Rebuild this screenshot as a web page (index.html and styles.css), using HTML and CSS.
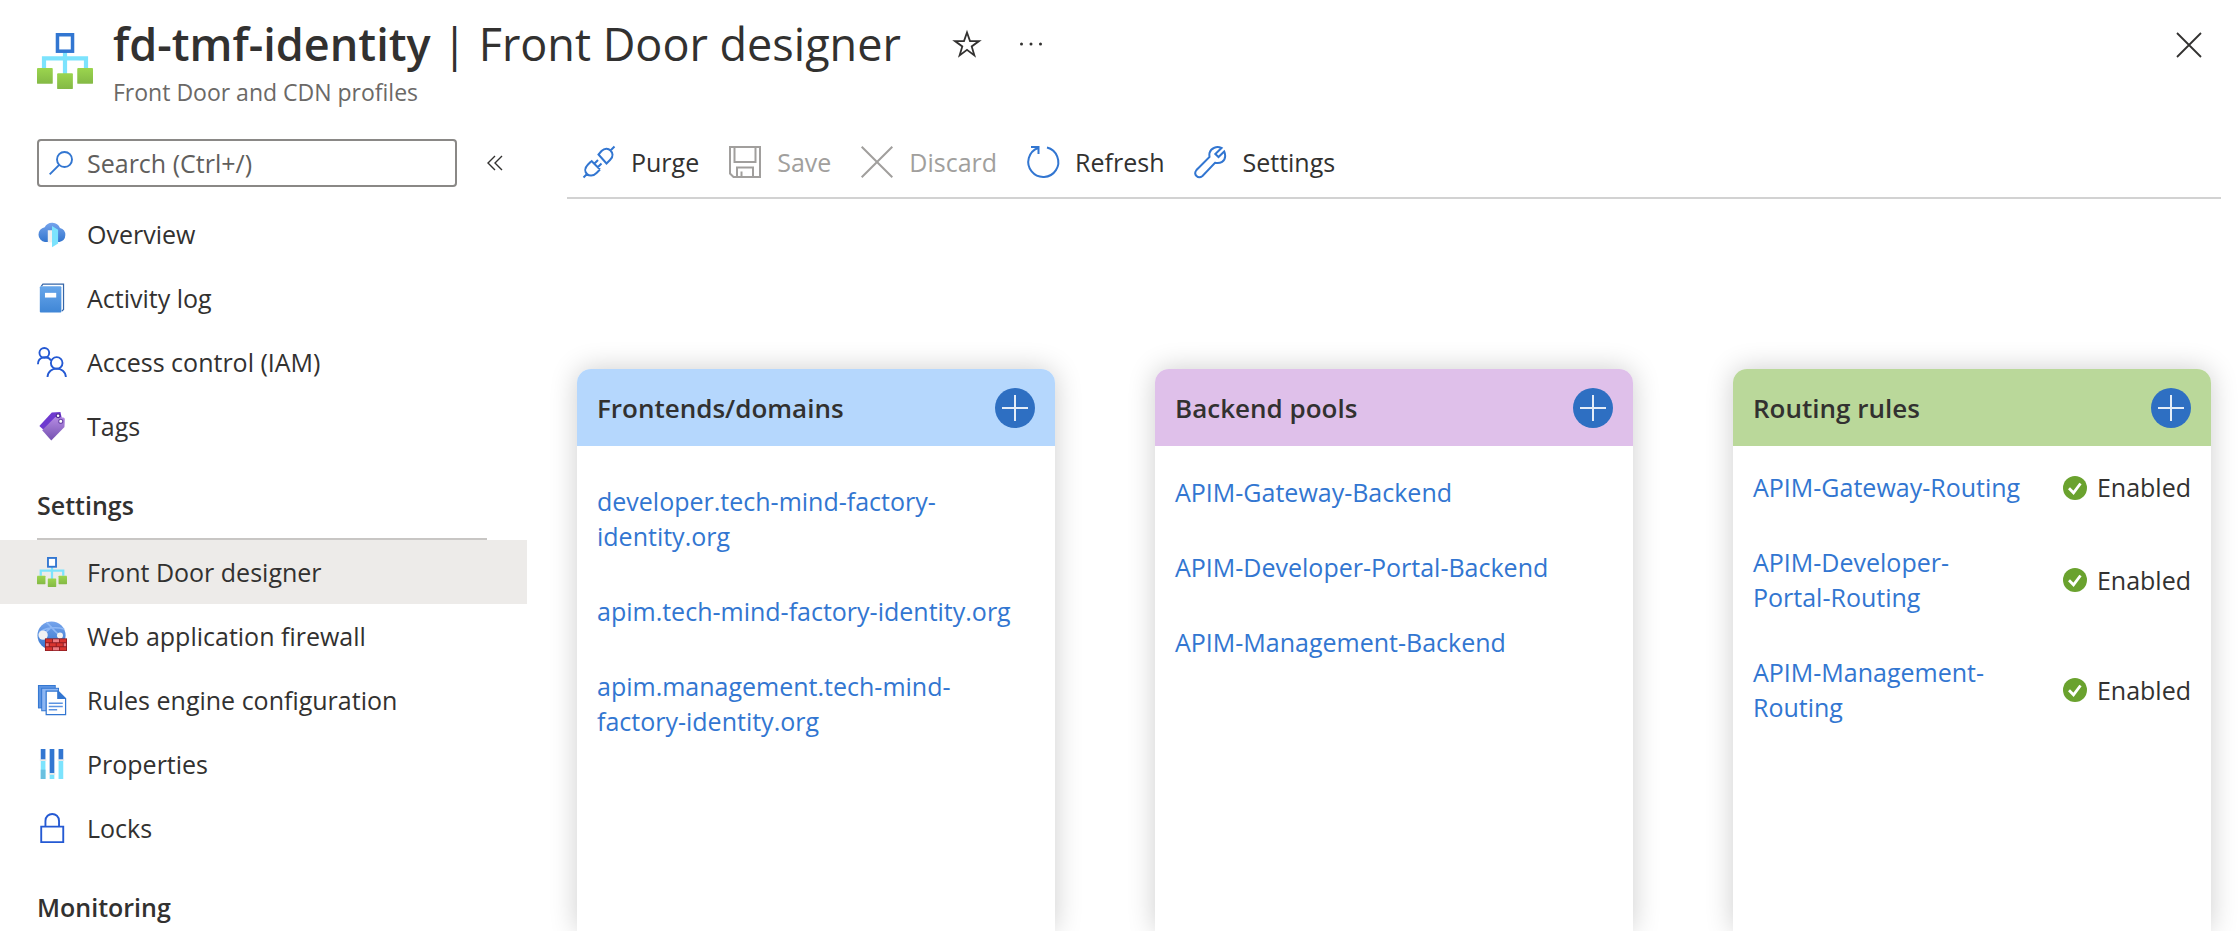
FILE: index.html
```html
<!DOCTYPE html>
<html lang="en">
<head>
<meta charset="utf-8">
<title>fd-tmf-identity | Front Door designer</title>
<link rel="stylesheet" href="styles.css">
</head>
<body>
<svg class="defs" aria-hidden="true">
  <defs>
    <linearGradient id="g-green" x1="0" y1="0" x2="0" y2="1"><stop offset="0" stop-color="#9bd54e"/><stop offset="1" stop-color="#84b945"/></linearGradient>
    <linearGradient id="g-cloud" x1="0" y1="0" x2="0" y2="1"><stop offset="0" stop-color="#76a4ec"/><stop offset="1" stop-color="#3375ce"/></linearGradient>
    <linearGradient id="g-book" x1="0" y1="0" x2="0" y2="1"><stop offset="0" stop-color="#67a6ea"/><stop offset="1" stop-color="#3f86d6"/></linearGradient>
    <linearGradient id="g-tag" x1="0" y1="0" x2="0" y2="1"><stop offset="0" stop-color="#b58be3"/><stop offset="1" stop-color="#7450b0"/></linearGradient>
    <symbol id="i-frontdoor" viewBox="0 0 32 32">
      <path d="M4 20v-5.500h24V20M16 10v14" fill="none" stroke="#7ce3fd" stroke-width="2.400"/>
      <rect x="11.700" y="1" width="8.600" height="9.400" fill="#fff" stroke="#3276d1" stroke-width="2"/>
      <rect x="0" y="20" width="9" height="9" rx=".5" fill="url(#g-green)"/>
      <rect x="11.500" y="23" width="9" height="9" rx=".5" fill="url(#g-green)"/>
      <rect x="23" y="20" width="9" height="9" rx=".5" fill="url(#g-green)"/>
    </symbol>
  </defs>
</svg>
<div class="app">
  <header class="header">
    <svg class="header-icon" aria-hidden="true"><use href="#i-frontdoor"/></svg>
    <div class="header-text">
      <div class="title-row">
        <h1 class="title"><strong>fd-tmf-identity</strong> | Front Door designer</h1>
        <button class="icon-button" aria-label="Add to favorites"><svg width="28" height="28" viewBox="0 0 28 28"><path d="M14 2.500l3 8.600h9l-7.300 5.300 2.700 9-7.400-5.500-7.400 5.500 2.700-9L2 11.100h9z" fill="none" stroke="#323130" stroke-width="1.800"/></svg></button>
        <button class="icon-button" aria-label="More"><svg width="24" height="24" viewBox="0 0 24 24" fill="#323130"><circle cx="2.500" cy="12" r="1.500"/><circle cx="12" cy="12" r="1.500"/><circle cx="21.500" cy="12" r="1.500"/></svg></button>
      </div>
      <p class="subtitle">Front Door and CDN profiles</p>
    </div>
    <button class="icon-button close" aria-label="Close"><svg width="24" height="24" viewBox="0 0 24 24"><path d="M0 0l24 24M24 0L0 24" stroke="#323130" stroke-width="1.800"/></svg></button>
  </header>
  <div class="body">
    <aside class="sidebar">
      <div class="search-row">
        <label class="search">
          <svg width="24" height="24" viewBox="0 0 24 24" fill="none" stroke="#3276d1" stroke-width="1.900" aria-hidden="true"><circle cx="15.500" cy="8.500" r="7.500"/><path d="M10.200 13.800L.7 23.300"/></svg>
          <input type="text" class="search-input" placeholder="Search (Ctrl+/)" aria-label="Search">
        </label>
        <button class="icon-button" aria-label="Collapse menu"><svg width="16" height="16" viewBox="0 0 16 16" fill="none" stroke="#323130" stroke-width="1.400"><path d="M8 1L1 8l7 7M15 1L8 8l7 7"/></svg></button>
      </div>
      <nav>
        <a class="nav-item" href="#"><svg class="nav-icon" viewBox="0 0 32 32" aria-hidden="true">
          <path d="M8.500 24.500a8 8 0 0 1-.3-15.800A9 9 0 0 1 24.500 9.500 7.700 7.700 0 0 1 24 24.500z" fill="url(#g-cloud)"/><path d="M11.500 12h5v13h-5z" fill="#f0f0f0"/><path d="M16 7.500l6.500 4V26L16 30z" fill="#7ce3fd"/></svg>Overview</a>
        <a class="nav-item" href="#"><svg class="nav-icon" viewBox="0 0 32 32" aria-hidden="true">
          <path d="M4.500 3.500l1.800-2.300h22v27L26.500 30" fill="#fff" stroke="#3465a8" stroke-width="1.300"/><rect x="3" y="3.500" width="23" height="28" rx="1" fill="url(#g-book)"/><rect x="8.500" y="10.500" width="12" height="5" fill="#fff"/></svg>Activity log</a>
        <a class="nav-item" href="#"><svg class="nav-icon" viewBox="0 0 32 32" fill="none" stroke="#2459d3" stroke-width="2" aria-hidden="true">
          <circle cx="7.800" cy="6.200" r="5.200"/><path d="M1 18.500c0-9 11-9.300 14-4"/><circle cx="21" cy="17" r="6.200"/><path d="M11.200 32c.5-12 19-12 19.600 0"/></svg>Access control (IAM)</a>
        <a class="nav-item" href="#"><svg class="nav-icon" viewBox="0 0 32 32" aria-hidden="true">
          <path d="M2.500 16L15.800 1.700 25 1l1.500 7L7 20z" fill="#6e39cf"/><path d="M5.500 20.500L19.500 6.300l8.500.7c1.200.2 1.700 1 1.700 2.200L29.300 17 15.200 31.500z" fill="url(#g-tag)"/><circle cx="22.500" cy="5" r="2" fill="#fff" stroke="#4d2a91" stroke-width="1.200"/><circle cx="25.300" cy="11" r="2.200" fill="#fff" stroke="#6b46a8" stroke-width="1.200"/></svg>Tags</a>
        <h2 class="nav-heading">Settings</h2>
        <a class="nav-item selected" href="#" aria-current="page"><svg class="nav-icon" aria-hidden="true"><use href="#i-frontdoor"/></svg>Front Door designer</a>
        <a class="nav-item" href="#"><svg class="nav-icon" viewBox="0 0 32 32" aria-hidden="true">
          <circle cx="15.500" cy="15.500" r="15" fill="url(#g-cloud)"/><path d="M10 1.500C14 4 17 10 24 15M3 12C9 7 20 6 29 8.500M7 14l9-8M8 17l9 11" stroke="#8fb8f5" stroke-width="1.800" fill="none"/><circle cx="6.500" cy="15" r="5" fill="#f2f2f2"/><circle cx="24.500" cy="15.500" r="3.200" fill="#f2f2f2"/>
          <rect x="8.500" y="18.500" width="23.500" height="13.500" fill="#8e1d22"/><path d="M9.500 19.500h6.500v3.200H9.500zM24.500 19.500h6.500v3.200h-6.500zM13.500 23.700h6.500v3.200h-6.500zM21 23.700h6.500v3.200h-6.500zM9.500 28h6.500v3.200H9.500zM24.500 28h6.500v3.200h-6.500z" fill="#d9352f"/><path d="M17 19.500h6.500v3.200H17zM9.500 23.700h3v3.200h-3zM28.500 23.700h2.500v3.200h-2.500zM17 28h6.500v3.200H17z" fill="#ec7a80"/></svg>Web application firewall</a>
        <a class="nav-item" href="#"><svg class="nav-icon" viewBox="0 0 32 32" aria-hidden="true">
          <path d="M1 0h19v25H1z" fill="#3276d1"/><path d="M2 1h17v23H2z" fill="#5c94e2"/><path d="M4.500 3h19v25h-19z" fill="#3276d1"/><path d="M5.500 4h17v23h-17z" fill="#8db6f2"/><path d="M9.800 6.500h12.700l8 8V31.500H9.800z" fill="#fff" stroke="#3276d1" stroke-width="1.300"/><path d="M21.500 5.500l9.500 9.500h-9.500z" fill="#3276d1"/><path d="M12.500 19.500h15M12.500 23h15M12.500 26.500h9" stroke="#5c94e2" stroke-width="1.600"/></svg>Rules engine configuration</a>
        <a class="nav-item" href="#"><svg class="nav-icon" viewBox="0 0 32 32" aria-hidden="true">
          <path d="M4 0h5v12H4zM13.500 0h5v26h-5zM23 0h5v12h-5z" fill="#3276d1"/><path d="M4 12.500h5V32H4zM13.500 27h5v5h-5zM23 12.500h5V32h-5z" fill="#7ce3fd"/><path d="M4 22h5v10H4z" fill="#6ac0e0"/><path d="M3 10.800h7v2H3zM12.500 25.500h7v2h-7zM22 10.800h7v2h-7z" fill="#e8e8e8"/></svg>Properties</a>
        <a class="nav-item" href="#"><svg class="nav-icon" viewBox="0 0 32 32" fill="none" stroke="#2459d3" stroke-width="2" aria-hidden="true">
          <path d="M4.500 14.500h23.500V31H4.500zM9 14V8.500C9 -1.500 23.500 -1.500 23.500 8.500V14"/></svg>Locks</a>
        <h2 class="nav-heading">Monitoring</h2>
      </nav>
    </aside>
    <main class="main">
      <div class="toolbar" role="toolbar" aria-label="Commands">
        <button class="command"><svg class="command-icon" viewBox="0 0 32 32" aria-hidden="true"><path d="M31.500.5l-4 4M.5 31.500l4-4M15.500 8.500l8 9 3.500-3.500c4-4 2.500-7.500.5-9.500s-5.500-3-9 .5zM8 14.500l9 9M8 15.500l-3 3c-4 4-3 7.500-1 9.500s6 2.500 9.500-1l3.500-3.500M11 18l4-4M14.500 21.500l4-4"/></svg>Purge</button>
        <button class="command" disabled><svg class="command-icon" viewBox="0 0 32 32" aria-hidden="true"><path d="M1 1h30v30H4.500L1 27.500zM5.500 1v15h21V1M8 31v-9.500h16V31M12.500 31v-5.500"/></svg>Save</button>
        <button class="command" disabled><svg class="command-icon" viewBox="0 0 32 32" aria-hidden="true"><path d="M.7.7l30.600 30.600M31.300.7L.7 31.300"/></svg>Discard</button>
        <button class="command"><svg class="command-icon" viewBox="0 0 32 32" aria-hidden="true"><path d="M4 1h7.500v7M11 2A15 15 0 1 0 20 1.500"/></svg>Refresh</button>
        <button class="command"><svg class="command-icon" viewBox="0 0 32 32" aria-hidden="true"><path d="M27.500 2C23 0 17 1.500 15.500 7c-.3 1.200-.2 2.500 0 4L2.500 24c-3.500 4.500 1.500 9.500 6 6L21 16.800c5.500 1.200 10-1.500 10.200-6.800 0-1.800-.4-3.200-1-4.500L24.500 11l-3.200-3z"/></svg>Settings</button>
      </div>
      <div class="board">
        <section class="panel">
          <header class="panel-header blue"><h2 class="panel-title">Frontends/domains</h2><button class="add" aria-label="Add frontend"><svg width="26" height="26" viewBox="0 0 26 26"><path d="M13 0v26M0 13h26"/></svg></button></header>
          <ul class="list frontends">
            <li><a href="#">developer.tech-mind-factory-identity.org</a></li>
            <li><a href="#">apim.tech-mind-factory-identity.org</a></li>
            <li><a href="#">apim.management.tech-mind-factory-identity.org</a></li>
          </ul>
        </section>
        <section class="panel">
          <header class="panel-header purple"><h2 class="panel-title">Backend pools</h2><button class="add" aria-label="Add backend pool"><svg width="26" height="26" viewBox="0 0 26 26"><path d="M13 0v26M0 13h26"/></svg></button></header>
          <ul class="list backends">
            <li><a href="#">APIM-Gateway-Backend</a></li>
            <li><a href="#">APIM-Developer-Portal-Backend</a></li>
            <li><a href="#">APIM-Management-Backend</a></li>
          </ul>
        </section>
        <section class="panel">
          <header class="panel-header green"><h2 class="panel-title">Routing rules</h2><button class="add" aria-label="Add routing rule"><svg width="26" height="26" viewBox="0 0 26 26"><path d="M13 0v26M0 13h26"/></svg></button></header>
          <ul class="list rules">
            <li class="rule"><a href="#">APIM-Gateway-Routing</a><span class="status"><svg width="24" height="24" viewBox="0 0 24 24" aria-hidden="true"><circle cx="12" cy="12" r="12" fill="#6aa22e"/><path d="M6 12.300l4.500 4.500L17.500 7.500" fill="none" stroke="#fff" stroke-width="2.800"/></svg>Enabled</span></li>
            <li class="rule"><a href="#">APIM-Developer-Portal-Routing</a><span class="status"><svg width="24" height="24" viewBox="0 0 24 24" aria-hidden="true"><circle cx="12" cy="12" r="12" fill="#6aa22e"/><path d="M6 12.300l4.500 4.500L17.500 7.500" fill="none" stroke="#fff" stroke-width="2.800"/></svg>Enabled</span></li>
            <li class="rule"><a href="#">APIM-Management-Routing</a><span class="status"><svg width="24" height="24" viewBox="0 0 24 24" aria-hidden="true"><circle cx="12" cy="12" r="12" fill="#6aa22e"/><path d="M6 12.300l4.500 4.500L17.500 7.500" fill="none" stroke="#fff" stroke-width="2.800"/></svg>Enabled</span></li>
          </ul>
        </section>
      </div>
    </main>
  </div>
</div>
</body>
</html>
```

FILE: styles.css
```css
* { box-sizing: border-box; }
body {
  margin: 0;
  background: #fff;
  color: #323130;
  font: 25px/35px "Open Sans", "Noto Sans", sans-serif;
}
h1, h2, p, ul { margin: 0; padding: 0; }
button { padding: 0; border: 0; background: none; color: inherit; font: inherit; }
a { color: inherit; text-decoration: none; }
svg { flex: none; overflow: visible; }
.defs { position: absolute; width: 0; height: 0; }

.app { display: flex; flex-direction: column; height: 100vh; overflow: hidden; }

.header { display: flex; align-items: flex-start; gap: 20px; padding: 12px 38px 0 37px; }
.header-icon { width: 56px; height: 56px; margin-top: 21px; }
.header-text { flex: 1; }
.title-row { display: flex; align-items: center; gap: 38px; }
.title { margin-right: 14px; font-size: 45px; line-height: 64px; font-weight: 400; }
.title strong { font-weight: 600; }
.icon-button { display: flex; align-items: center; justify-content: center; }
.close { margin-top: 21px; }
.subtitle { font-size: 23px; line-height: 32px; color: #6b6967; }

.body { display: flex; flex: 1; min-height: 0; }
.sidebar { flex: none; width: 527px; padding-top: 31px; overflow: hidden; }
.search-row { display: flex; align-items: center; gap: 30px; padding-left: 37px; margin-bottom: 15px; }
.search { display: flex; align-items: center; gap: 14px; width: 420px; height: 48px; padding: 0 10px; border: 2px solid #8a8886; border-radius: 4px; }
.search-input { flex: 1; min-width: 0; padding: 0; border: 0; outline: 0; background: none; color: #323130; font: inherit; }
.search-input::placeholder { color: #605e5c; opacity: 1; }

.nav-item { display: flex; align-items: center; gap: 20px; height: 64px; padding-left: 37px; }
.nav-icon { width: 30px; height: 30px; }
.selected { background: #edebe9; }
.nav-heading { height: 82px; margin: 0 40px 0 37px; padding-top: 30px; border-bottom: 2px solid #c8c6c4; font-size: 25px; line-height: 35px; font-weight: 600; }

.main { display: flex; flex: 1; flex-direction: column; min-width: 0; padding: 31px 18px 0 40px; }
.toolbar { display: flex; gap: 30px; height: 60px; padding: 0 16px 12px; border-bottom: 2px solid #d2d2d2; }
.command { display: flex; align-items: center; gap: 16px; }
.command-icon { width: 32px; height: 32px; fill: none; stroke: #3276d1; stroke-width: 2; }
.command:disabled { color: #a19f9d; }
.command:disabled .command-icon { stroke: #a19f9d; }

.board { display: grid; flex: 1; grid-template-columns: repeat(3, 1fr); gap: 100px; padding: 170px 10px 0; }
.panel { border-radius: 14px 14px 0 0; box-shadow: 0 0 28px rgba(0, 0, 0, .2); }
.panel-header { display: flex; align-items: center; justify-content: space-between; height: 77px; padding: 0 20px; border-radius: 14px 14px 0 0; }
.panel-title { font-size: 26px; line-height: 36px; font-weight: 600; }
.blue { background: #b5d7fd; }
.purple { background: #dfc0ea; }
.green { background: #bad89a; }
.add { display: flex; align-items: center; justify-content: center; width: 40px; height: 40px; border-radius: 50%; background: #2e6fc2; }
.add path { fill: none; stroke: #e4edf8; stroke-width: 2; }
.list { display: flex; flex-direction: column; gap: 40px; padding: 0 20px; list-style: none; }
.list a { color: #3276d1; }
.frontends { padding-top: 38px; }
.backends { padding-top: 29px; }
.rules { padding-top: 24px; }
.rule { display: flex; align-items: center; justify-content: space-between; gap: 39px; }
.status { display: flex; flex: none; align-items: center; gap: 10px; }
```
